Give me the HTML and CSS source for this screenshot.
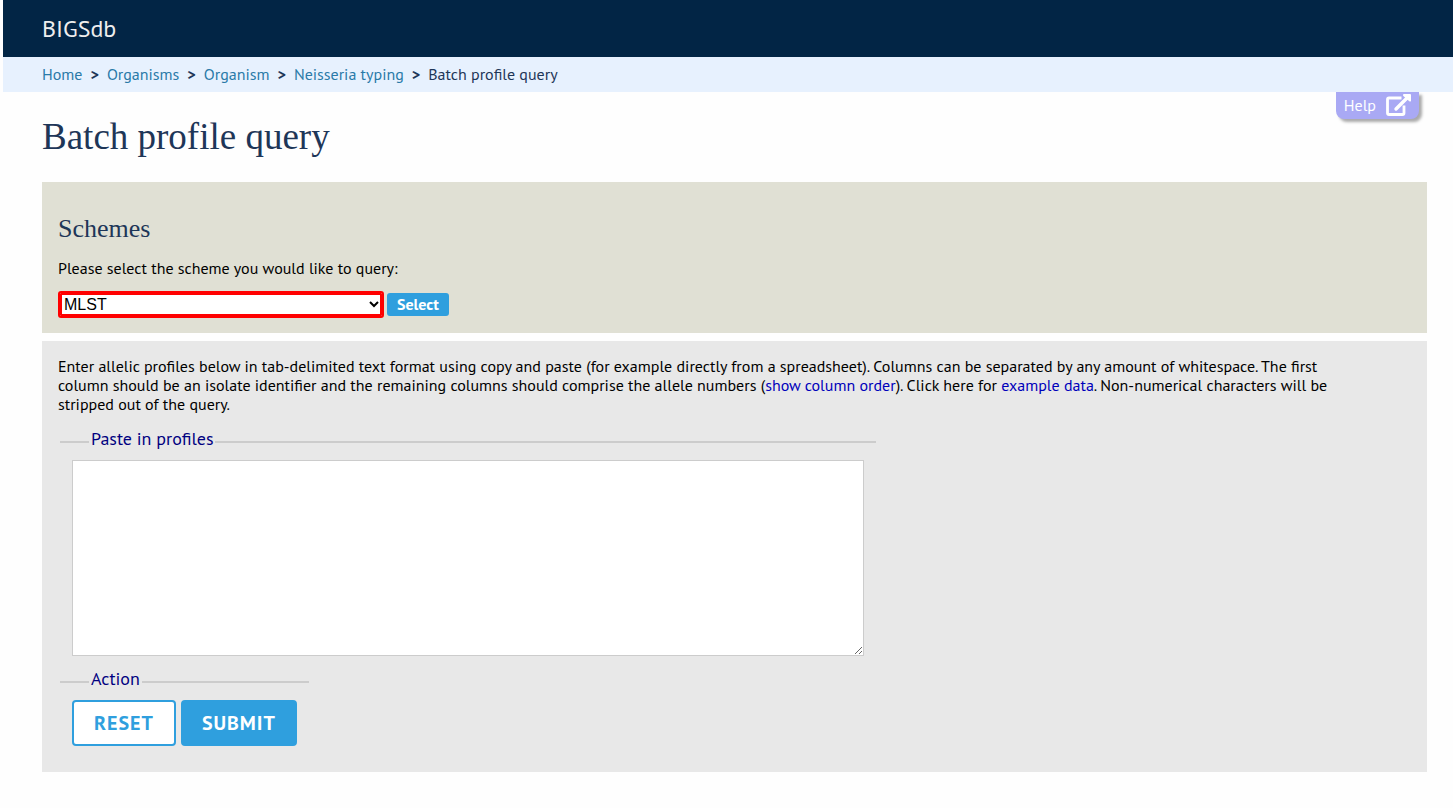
FILE: index.html
```html
<!DOCTYPE html>
<html lang="en">
<head>
    <meta charset="utf-8">
    <title>Batch profile query</title>
    <link rel="stylesheet" href="styles.css">
</head>
<body>

<header class="banner">BIGSdb</header>

<nav class="breadcrumbs" aria-label="Breadcrumb">
    <a href="#">Home</a>
    <span class="sep">&gt;</span>
    <a href="#">Organisms</a>
    <span class="sep">&gt;</span>
    <a href="#">Organism</a>
    <span class="sep">&gt;</span>
    <a href="#">Neisseria typing</a>
    <span class="sep">&gt;</span>
    <span>Batch profile query</span>
</nav>

<main class="content">
    <a class="help" href="#">Help
        <svg class="help-icon" viewBox="0 0 25 22" width="25" height="22" aria-hidden="true">
            <path d="M15.500 4H3Q1.500 4 1.500 5.500V19Q1.500 20.500 3 20.500H16.500Q18 20.500 18 19V11.500" fill="none" stroke="currentColor" stroke-width="2.800"/>
            <path d="M10 15L21 4" fill="none" stroke="currentColor" stroke-width="3.400" stroke-linecap="round"/>
            <path d="M17 1Q17 0 18 0H24Q25 0 25 1V7Q24.300 8 23.300 7.300L17.300 2Q17 1.600 17 1Z" fill="currentColor"/>
        </svg>
    </a>

    <h1>Batch profile query</h1>

    <form class="box query-box">
        <h2>Schemes</h2>
        <p><label for="scheme_id">Please select the scheme you would like to query:</label></p>
        <div class="scheme-row">
            <select name="scheme_id" id="scheme_id">
                <option>MLST</option>
            </select>
            <button type="submit" class="small-submit">Select</button>
        </div>
    </form>

    <form class="box form-box">
        <p class="intro">Enter allelic profiles below in tab-delimited text format using copy and paste (for example directly
            from a spreadsheet). Columns can be separated by any amount of whitespace. The first column should be an
            isolate identifier and the remaining columns should comprise the allele numbers (<a href="#">show column
            order</a>). Click here for <a href="#">example data</a>. Non-numerical characters will be stripped out of
            the query.</p>

        <fieldset>
            <legend><label for="profiles">Paste in profiles</label></legend>
            <textarea name="profiles" id="profiles"></textarea>
        </fieldset>

        <fieldset>
            <legend>Action</legend>
            <div class="actions">
                <button type="reset" class="reset">RESET</button>
                <button type="submit" class="submit">SUBMIT</button>
            </div>
        </fieldset>
    </form>
</main>

</body>
</html>
```

FILE: styles.css
```css
* {
    box-sizing: border-box;
}

body {
    margin: 0 0 0 3px;
    font-family: "PT Sans", "Noto Sans", sans-serif;
    font-size: 16px;
    line-height: 19px;
    color: #000;
    background-color: #fefefe;
}

a {
    color: #00b;
    text-decoration: none;
}

.banner {
    padding: 14px 39px;
    font-size: 24px;
    line-height: 29px;
    color: #eee;
    background-color: #022545;
}

.breadcrumbs {
    display: flex;
    gap: 8px;
    padding: 8px 39px;
    color: #1e3658;
    background-color: #e7f1fe;
}

.breadcrumbs a {
    color: #2a7aa8;
}

.sep {
    font-weight: bold;
}

.content {
    position: relative;
    padding: 23px 26px 36px 39px;
}

h1, h2 {
    font-family: "Liberation Serif", serif;
    font-weight: 400;
    color: #1e3658;
}

h1 {
    margin: 0 0 24px;
    font-size: 37px;
    line-height: 43px;
}

h2 {
    margin: 16px 0 15px;
    font-size: 26px;
    line-height: 30px;
}

p {
    margin: 0 0 13px;
}

/* hangs from the bottom edge of the breadcrumb bar */
.help {
    position: absolute;
    top: 0;
    right: 34px;
    display: flex;
    align-items: center;
    gap: 10px;
    padding: 2px 8px 3px;
    color: #fff;
    background-color: #a9a9f4;
    border-radius: 0 0 8px 8px;
    box-shadow: 3px 3px 3px #aaa;
}

.box {
    margin-bottom: 8px;
    padding: 16px;
}

.query-box {
    padding-bottom: 15px;
    background-color: #e0e0d4;
}

.form-box {
    margin-bottom: 0;
    padding-bottom: 14px;
    background-color: #e8e8e8;
}

.scheme-row {
    display: flex;
    align-items: center;
    gap: 3px;
}

select {
    width: 326px;
    height: 27px;
    font-family: "Liberation Sans", sans-serif;
    font-size: 16px;
    color: #000;
    background-color: #fff;
    border: 2px solid #f00;
    border-radius: 3px;
    box-shadow: inset 0 0 0 2px #f00;
}

button {
    font-family: inherit;
    font-weight: bold;
    color: #fff;
    background-color: #2f9fde;
    border: 2px solid #2f9fde;
    border-radius: 4px;
    cursor: pointer;
}

.small-submit {
    padding: 0 8px;
    font-size: 16px;
    line-height: 19px;
    border-radius: 3px;
}

.intro {
    max-width: 1290px;
    margin-bottom: 14px;
}

fieldset {
    width: fit-content;
    margin: 0 2px 12px;
    padding: 5px 12px 0;
    border: 0 solid #ccc;
    border-top-width: 2px;
}

legend {
    margin-left: 17px;
    padding: 0 2px 5px;
    font-size: 18px;
    line-height: 22px;
    color: #000080;
}

textarea {
    display: block;
    width: 792px;
    height: 196px;
    background-color: #fff;
    border: 1px solid #ccc;
}

.actions {
    display: flex;
    gap: 5px;
}

.reset, .submit {
    padding: 8px 19px;
    font-size: 20px;
    line-height: 26px;
    letter-spacing: 1px;
}

.reset {
    padding: 8px 20px;
    color: #2f9fde;
    background-color: #fff;
}
```
